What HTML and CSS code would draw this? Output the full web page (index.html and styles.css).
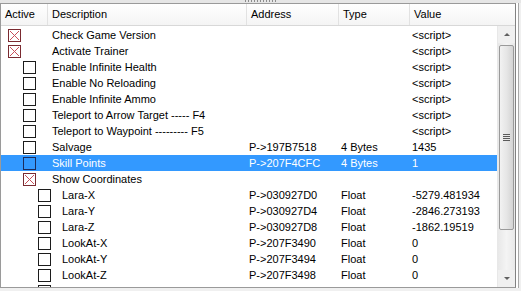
FILE: index.html
```html
<!DOCTYPE html>
<html lang="en">

<head>
    <meta charset="UTF-8">
    <title>Cheat Table</title>
    <link rel="stylesheet" href="styles.css">
</head>

<body>
    <div class="grip-bar"><span class="grip"></span></div>
    <div class="list">
        <div class="header">
            <div class="col-active">Active</div>
            <div class="col-desc">Description</div>
            <div class="col-addr">Address</div>
            <div class="col-type">Type</div>
            <div class="col-val">Value</div>
        </div>
        <div class="body">
            <div class="rows" id="rows"></div>
            <div class="scrollbar">
                <div class="sb-btn"><span class="arrow-up"></span></div>
                <div class="sb-track">
                    <div class="sb-thumb"><span class="sb-lines"></span></div>
                </div>
                <div class="sb-btn"><span class="arrow-down"></span></div>
            </div>
        </div>
    </div>
    <script>
        const entries = [
            { lvl: 0, on: true, desc: "Check Game Version", val: "<script>" },
            { lvl: 0, on: true, desc: "Activate Trainer", val: "<script>" },
            { lvl: 1, desc: "Enable Infinite Health", val: "<script>" },
            { lvl: 1, desc: "Enable No Reloading", val: "<script>" },
            { lvl: 1, desc: "Enable Infinite Ammo", val: "<script>" },
            { lvl: 1, desc: "Teleport to Arrow Target ----- F4", val: "<script>" },
            { lvl: 1, desc: "Teleport to Waypoint  --------- F5", val: "<script>" },
            { lvl: 1, desc: "Salvage", addr: "P->197B7518", type: "4 Bytes", val: "1435" },
            { lvl: 1, desc: "Skill Points", addr: "P->207F4CFC", type: "4 Bytes", val: "1", sel: true },
            { lvl: 1, on: true, desc: "Show Coordinates" },
            { lvl: 2, desc: "Lara-X", addr: "P->030927D0", type: "Float", val: "-5279.481934" },
            { lvl: 2, desc: "Lara-Y", addr: "P->030927D4", type: "Float", val: "-2846.273193" },
            { lvl: 2, desc: "Lara-Z", addr: "P->030927D8", type: "Float", val: "-1862.19519" },
            { lvl: 2, desc: "LookAt-X", addr: "P->207F3490", type: "Float", val: "0" },
            { lvl: 2, desc: "LookAt-Y", addr: "P->207F3494", type: "Float", val: "0" },
            { lvl: 2, desc: "LookAt-Z", addr: "P->207F3498", type: "Float", val: "0" },
            // only the top of this row's checkbox is visible
            { lvl: 2 }
        ];

        const cross = '<svg width="13" height="13" viewBox="0 0 13 13"><rect x="0.5" y="0.5" width="12" height="12" fill="#fff" stroke="#7a2a30"/><path d="M2 2L11 11M11 2L2 11" stroke="#c8505a" stroke-width="1"/></svg>';

        const esc = s => (s || "").replace(/</g, "&lt;").replace(/>/g, "&gt;");

        document.getElementById("rows").innerHTML = entries.map(e => `
            <div class="row lvl${e.lvl}${e.sel ? " selected" : ""}">
                <div class="col-main">
                    <span class="check${e.on ? " on" : ""}">${e.on ? cross : ""}</span>
                    <span class="desc">${esc(e.desc)}</span>
                </div>
                <div class="col-addr">${esc(e.addr)}</div>
                <div class="col-type">${esc(e.type)}</div>
                <div class="col-val">${esc(e.val)}</div>
            </div>`).join("");
    </script>
</body>

</html>
```

FILE: styles.css
```css
body {
    margin: 0;
    width: 521px;
    height: 291px;
    overflow: hidden;
    background-color: #f0f0f0;
    font-family: "Liberation Sans", Arial, sans-serif;
    font-size: 11px;
    color: #000;
}

.grip-bar {
    height: 3px;
    background-color: #e6e6e6;
    display: flex;
    justify-content: center;
}

.grip {
    width: 34px;
    height: 2px;
    background-image: radial-gradient(circle, #8c8c8c 45%, transparent 50%);
    background-size: 3px 2px;
}

.list {
    width: 514px;
    height: 283px;
    border: 1px solid #9a9a9a;
    border-right-color: #828282;
    box-shadow: 2px 0 0 #fff, 3px 0 0 #a8a8a8;
    background-color: #fff;
    display: flex;
    flex-direction: column;
}

.header {
    display: flex;
    height: 21px;
    line-height: 21px;
    background: linear-gradient(#ffffff, #f4f4f4);
    border-bottom: 1px solid #d8d8d8;
}

.header > div {
    padding-left: 4px;
    box-sizing: border-box;
    border-right: 1px solid #e2e2e2;
}

.header .col-active {
    width: 47px;
}

.header .col-desc {
    width: 199px;
}

.header .col-addr {
    width: 92px;
}

.header .col-type {
    width: 71px;
}

.header .col-val {
    flex: 1;
    border-right: none;
}

.body {
    flex: 1;
    display: flex;
    overflow: hidden;
}

.rows {
    flex: 1;
    padding-top: 1px;
    overflow: hidden;
}

.row {
    display: flex;
    height: 16px;
    line-height: 16px;
    white-space: nowrap;
}

.row.selected {
    background-color: #3399ff;
    color: #fff;
}

.col-main {
    width: 247px;
    display: flex;
    align-items: center;
}

.row .col-addr {
    width: 92px;
    padding-left: 1px;
}

.row .col-type {
    width: 71px;
}

.row .col-val {
    flex: 1;
}

.check {
    width: 13px;
    height: 13px;
    box-sizing: border-box;
    border: 1px solid #1c1c1c;
    background-color: #fff;
    flex: none;
}

.check.on {
    border: none;
}

.check svg {
    display: block;
}

.selected .check {
    background-color: #3399ff;
    border-color: #1c2c5c;
}

.lvl0 .check {
    margin-left: 7px;
    margin-right: 31px;
}

.lvl1 .check {
    margin-left: 22px;
    margin-right: 16px;
}

.lvl2 .check {
    margin-left: 37px;
    margin-right: 11px;
}

.scrollbar {
    width: 17px;
    display: flex;
    flex-direction: column;
    background-color: #f0f0f0;
    border-left: 1px solid #e8e8e8;
}

.sb-btn {
    height: 17px;
    display: flex;
    align-items: center;
    justify-content: center;
}

.arrow-up,
.arrow-down {
    width: 0;
    height: 0;
    border-left: 3px solid transparent;
    border-right: 3px solid transparent;
}

.arrow-up {
    border-bottom: 3px solid #606060;
}

.arrow-down {
    border-top: 3px solid #606060;
}

.sb-track {
    flex: 1;
    padding: 2px 1px;
    background: linear-gradient(90deg, #e8e8e8, #f4f4f4 50%, #e8e8e8);
}

.sb-thumb {
    height: 185px;
    box-sizing: border-box;
    border: 1px solid #9a9a9a;
    border-radius: 2px;
    background: linear-gradient(90deg, #f2f2f2, #e6e6e6 50%, #d4d4d4);
    display: flex;
    align-items: center;
    justify-content: center;
}

.sb-lines {
    width: 7px;
    height: 7px;
    background: repeating-linear-gradient(#5a5a5a 0 1px, #e8e8e8 1px 2px);
}
```
